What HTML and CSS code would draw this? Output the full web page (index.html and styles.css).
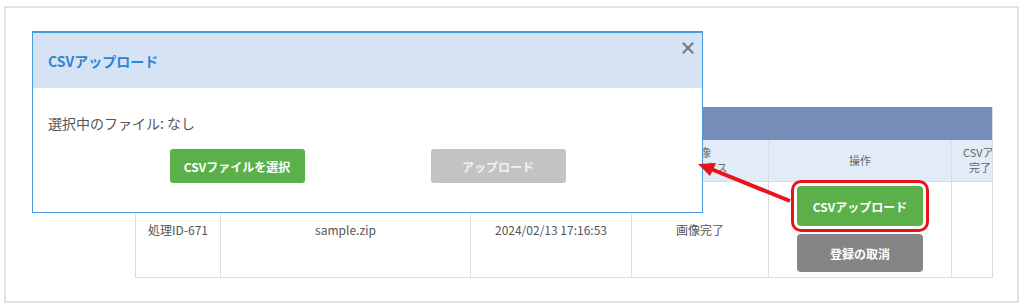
FILE: index.html
```html
<!DOCTYPE html>
<html lang="ja">
<head>
    <meta charset="UTF-8">
    <meta name="viewport" content="width=device-width, initial-scale=1.0">
    <title>CSVアップロード</title>
    <link rel="stylesheet" href="styles.css">
</head>
<body>
    <div class="frame">
        <div class="table-wrap">
            <div class="table-title"></div>
            <table class="list">
                <colgroup>
                    <col class="c1">
                    <col class="c2">
                    <col class="c3">
                    <col class="c4">
                    <col class="c5">
                    <col class="c6">
                </colgroup>
                <thead>
                    <tr>
                        <th>処理ID</th>
                        <th>ファイル名</th>
                        <th>登録日時</th>
                        <th>画像<br>ステータス</th>
                        <th>操作</th>
                        <th class="last-head">CSVアップロード<br><span class="indent">完了日時</span></th>
                    </tr>
                </thead>
                <tbody>
                    <tr>
                        <td>処理ID-671</td>
                        <td>sample.zip</td>
                        <td>2024/02/13 17:16:53</td>
                        <td>画像完了</td>
                        <td>
                            <div class="ops">
                                <button class="btn btn-green btn-marked">CSVアップロード</button>
                                <button class="btn btn-dark">登録の取消</button>
                            </div>
                        </td>
                        <td></td>
                    </tr>
                </tbody>
            </table>
        </div>

        <!-- upload dialog -->
        <div class="modal">
            <div class="modal-head">
                <span class="modal-title">CSVアップロード</span>
                <svg class="close" width="12" height="12" viewBox="0 0 12 12">
                    <path d="M1.5 1.5 L10.5 10.5 M10.5 1.5 L1.5 10.5" stroke="#7a7a7a" stroke-width="2.2" stroke-linecap="round"/>
                </svg>
            </div>
            <div class="modal-body">
                <p class="file-state">選択中のファイル: なし</p>
                <div class="modal-actions">
                    <button class="btn btn-green btn-wide">CSVファイルを選択</button>
                    <button class="btn btn-off btn-wide">アップロード</button>
                </div>
            </div>
        </div>

        <svg class="arrow" width="110" height="60" viewBox="0 0 110 60">
            <line x1="100" y1="51" x2="21" y2="19" stroke="#e8131b" stroke-width="4"/>
            <polygon points="8,14 26,13 20,26" fill="#e8131b"/>
        </svg>
    </div>
</body>
</html>
```

FILE: styles.css
```css
* {
    box-sizing: border-box;
}
body {
    margin: 0;
    font-family: "Noto Sans CJK JP", "Noto Sans", sans-serif;
    background-color: #ffffff;
    color: #555555;
}
.frame {
    position: relative;
    margin: 6px 5px 0 4px;
    height: 297px;
    border: 2px solid #e2e2e2;
    padding: 99px 0 0 129px;
    overflow: hidden;
}
.table-wrap {
    width: 858px;
    overflow: hidden;
    border-right: 1px solid #d8dce4;
}
.table-title {
    height: 33px;
    background-color: #748db9;
}
.list {
    width: 930px;
    table-layout: fixed;
    border-collapse: collapse;
    font-size: 12px;
}
.c1 { width: 85px; }
.c2 { width: 250px; }
.c3 { width: 161px; }
.c4 { width: 137px; }
.c5 { width: 183px; }
.c6 { width: 114px; }
.list th {
    height: 41px;
    background-color: #e2ecf6;
    border: 1px solid #d9dee5;
    border-top: none;
    font-size: 11px;
    font-weight: normal;
    line-height: 15px;
    color: #666666;
    text-align: center;
    vertical-align: middle;
    padding: 0;
}
.list th.last-head {
    text-align: left;
    padding-left: 11px;
    white-space: nowrap;
}
.indent {
    padding-left: 6px;
}
.list td {
    height: 96px;
    border: 1px solid #dddddd;
    text-align: center;
    vertical-align: middle;
    padding: 0;
    white-space: nowrap;
}
.ops {
    display: flex;
    flex-direction: column;
    align-items: center;
    gap: 8px;
}
.btn {
    font-family: inherit;
    font-size: 12px;
    font-weight: bold;
    color: #ffffff;
    border: none;
    border-radius: 4px;
    padding: 0;
}
.btn-green {
    background-color: #5bb04a;
}
.btn-dark {
    background-color: #858585;
    width: 126px;
    height: 38px;
}
.btn-marked {
    width: 126px;
    height: 40px;
    outline: 3px solid #e8131b;
    outline-offset: 3px;
}
.btn-off {
    background-color: #c3c3c3;
    color: #f2f2f2;
}
.btn-wide {
    width: 135px;
    height: 34px;
    border-radius: 3px;
}
.modal {
    position: absolute;
    left: 26px;
    top: 23px;
    width: 671px;
    height: 182px;
    background-color: #ffffff;
    border: 1px solid #4a9ce0;
    border-top-width: 2px;
}
.modal-head {
    position: relative;
    height: 55px;
    background-color: #d5e3f4;
    display: flex;
    align-items: center;
    padding-left: 15px;
}
.modal-title {
    font-size: 14px;
    font-weight: bold;
    color: #3283d3;
}
.close {
    position: absolute;
    right: 8px;
    top: 9px;
}
.modal-body {
    padding: 25px 0 0 15px;
}
.file-state {
    margin: 0;
    font-size: 14px;
    line-height: 20px;
    color: #555555;
}
.modal-actions {
    display: flex;
    justify-content: center;
    gap: 126px;
    margin-top: 16px;
    padding-right: 15px;
}
.arrow {
    position: absolute;
    left: 684px;
    top: 142px;
}
```
